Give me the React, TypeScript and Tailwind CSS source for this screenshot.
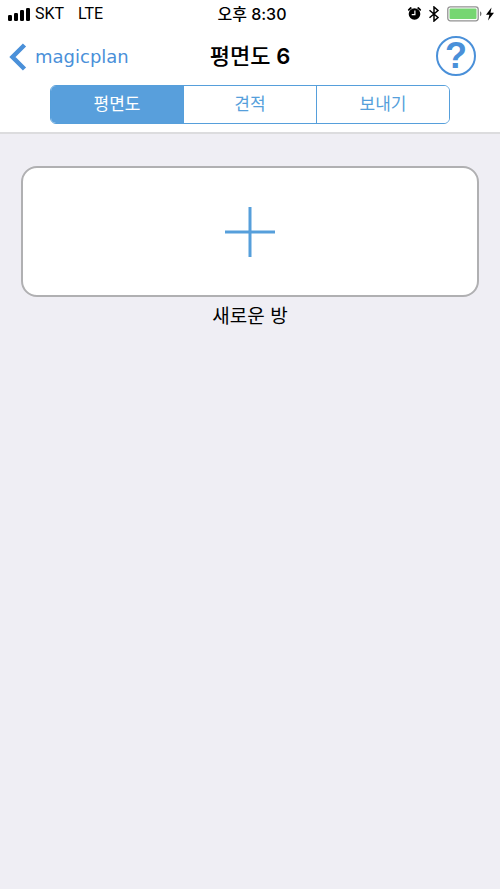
import { useState } from "react";

const tabs = ["평면도", "견적", "보내기"];

function StatusBar() {
  return (
    <div className="grid h-7 grid-cols-3 items-center px-2 text-base leading-7">
      <div className="flex items-center font-['Roboto',sans-serif]">
        <svg className="mr-[5px] h-4 w-[22px]" viewBox="0 0 22 16" aria-hidden="true">
          <rect x="0" y="9" width="4" height="6" rx="1.2" />
          <rect x="6" y="7" width="4" height="8" rx="1.2" />
          <rect x="12" y="4" width="4" height="11" rx="1.2" />
          <rect x="18" y="2" width="4" height="13" rx="1.2" />
        </svg>
        <span className="mr-3.5">SKT</span>
        <span>LTE</span>
      </div>
      <div className="pl-1 text-center font-medium">오후 8:30</div>
      <div className="flex items-center justify-end">
        <svg className="mr-1.5 h-4 w-4" viewBox="0 0 16 16" aria-hidden="true">
          <circle cx="8.5" cy="8" r="5.8" />
          <path d="M2.8 3.8 4.8 2M14.2 3.8l-2-1.8" stroke="black" strokeWidth="1.8" strokeLinecap="round" />
          <path d="M8.9 4.6v4H5.7" fill="none" stroke="white" strokeWidth="1.2" />
        </svg>
        <svg className="mr-[7px] h-4 w-3" viewBox="0 0 12 16" fill="none" stroke="black" strokeWidth="1.5" aria-hidden="true">
          <path d="M1.5 4.2 10 11.5 6 15V1l4 3.5-8.5 7.3" />
        </svg>
        <svg className="mr-[3px] h-4 w-9" viewBox="0 0 36 16" aria-hidden="true">
          <rect x="0.8" y="0.8" width="30.4" height="14" rx="2.5" fill="white" stroke="#929292" strokeWidth="1.3" />
          <rect x="2.5" y="2.5" width="27" height="10.6" rx="1" fill="#76d672" />
          <path d="M33 5.3c2 1 2 4 0 5z" fill="#777" />
        </svg>
        <svg className="-mr-0.5 h-4 w-2" viewBox="0 0 8 16" aria-hidden="true">
          <path d="M5.5 1.5 0 8.8h3.4L2 14.5l6-7.7H4.5z" />
        </svg>
      </div>
    </div>
  );
}

export default function App() {
  const [active, setActive] = useState(0);

  return (
    <div className="min-h-screen bg-[#efeef4] font-['Inter','Noto_Sans_CJK_KR',sans-serif] text-black">
      <header className="border-b-2 border-[#dcdcde] bg-white pb-2">
        <StatusBar />
        <div className="grid h-14 grid-cols-3 items-center pr-6 pl-2">
          <button type="button" className="flex items-center gap-[7px] pt-px font-['DejaVu_Sans',sans-serif] text-lg text-[#4a90d9]">
            <svg className="h-7 w-5" viewBox="0 0 20 28" fill="none" stroke="currentColor" strokeWidth="4.5" aria-hidden="true">
              <path d="M16.5 2 4.5 14l12 12" />
            </svg>
            magicplan
          </button>
          <h1 className="pl-4 text-center text-[22px] font-medium">
            평면도 <span className="font-semibold">6</span>
          </h1>
          <button type="button" aria-label="도움말" className="flex size-10 items-center justify-center justify-self-end rounded-full border-2 border-[#4a90d9] font-['Liberation_Sans',sans-serif] text-4xl font-bold text-[#4a90d9]">
            ?
          </button>
        </div>
        <nav className="mx-[50px] mt-px flex h-[39px] overflow-hidden rounded-md border border-[#569fdb]">
          {tabs.map((tab, i) => (
            <button
              key={tab}
              type="button"
              aria-pressed={active === i}
              onClick={() => setActive(i)}
              className={`flex-1 border-[#569fdb] text-[17px] not-last:border-r ${active === i ? "bg-[#589fdc] text-white" : "bg-white text-[#569fdb]"}`}
            >
              {tab}
            </button>
          ))}
        </nav>
      </header>
      <main className="px-[21px] pt-8">
        <button type="button" aria-labelledby="new-room" className="flex h-[131px] w-full items-center justify-center rounded-2xl border-2 border-[#b0b0b2] bg-white text-[#569fdb]">
          <svg className="size-[50px]" viewBox="0 0 50 50" stroke="currentColor" strokeWidth="3" aria-hidden="true">
            <path d="M0 25h50M25 0v50" />
          </svg>
        </button>
        <p id="new-room" className="mt-1 text-center text-[19px] leading-8">새로운 방</p>
      </main>
    </div>
  );
}
